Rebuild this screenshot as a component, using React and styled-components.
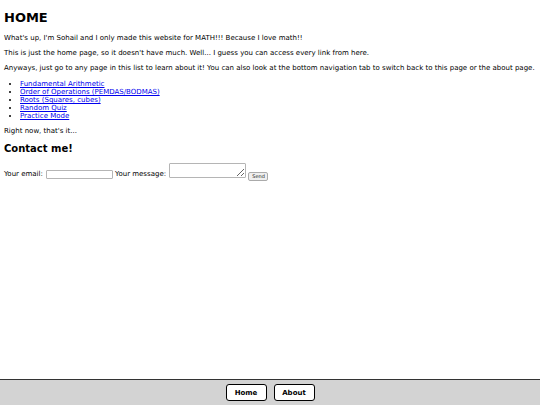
import React from 'react';
import styled, { createGlobalStyle } from 'styled-components';

const GlobalStyle = createGlobalStyle`
	html, body {
		margin: 0;
		padding: 0;
		height: 100%;
	}
	body {
		font-family: "DejaVu Sans", Verdana, sans-serif;
		font-size: 7px;
		color: #000;
		background: #fff;
	}
	#root {
		height: 100%;
	}
`;

const Page = styled.div`
	min-height: 100vh;
	display: flex;
	flex-direction: column;
`;

const Main = styled.main`
	flex: 1;
	padding: 0 4px;
`;

const H1 = styled.h1`
	font-size: 13px;
	margin: 10px 0 9px;
`;

const H2 = styled.h2`
	font-size: 10px;
	margin: 8px 0 9px;
`;

const P = styled.p`
	margin: 7px 0;
`;

const List = styled.ul`
	margin: 8px 0 7px;
	padding-left: 16px;
`;

const Item = styled.li`
	line-height: 8px;
`;

const A = styled.a`
	color: #0000ee;
`;

const Form = styled.form`
	margin: 0;
	line-height: 9px;
`;

const Input = styled.input`
	box-sizing: border-box;
	width: 67px;
	height: 9px;
	padding: 0 2px;
	border: 1px solid #b5b5b5;
	border-radius: 1px;
	font-size: 6px;
	margin: 0 2px 0 1px;
	vertical-align: baseline;
`;

const TextArea = styled.textarea`
	box-sizing: border-box;
	width: 77px;
	height: 15px;
	padding: 1px;
	border: 1px solid #b5b5b5;
	border-radius: 1px;
	font-size: 6px;
	margin: 0 2px 0 1px;
	vertical-align: -2px;
`;

const SendBtn = styled.button`
	box-sizing: border-box;
	font-family: "DejaVu Sans", sans-serif;
	font-size: 5px;
	padding: 0 3px;
	height: 9px;
	width: 20px;
	margin: 0;
	border: 1px solid #aaa;
	border-radius: 2px;
	background: #efefef;
	color: #222;
	vertical-align: -2px;
`;

const Footer = styled.nav`
	border-top: 1px solid #333;
	background: #d3d3d3;
	height: 25px;
	display: flex;
	align-items: center;
	justify-content: center;
	gap: 7px;
`;

const NavBtn = styled.button`
	font-family: "DejaVu Sans", sans-serif;
	font-weight: bold;
	font-size: 7px;
	width: 41px;
	height: 17px;
	background: #fff;
	color: #000;
	border: 1px solid #000;
	border-radius: 3px;
	cursor: pointer;
`;

const links = [
	'Fundamental Arithmetic',
	'Order of Operations (PEMDAS/BODMAS)',
	'Roots (Squares, cubes)',
	'Random Quiz',
	'Practice Mode',
];

const App = () => {
	return (
		<Page>
			<GlobalStyle />
			<Main>
				<H1>HOME</H1>
				<P>What's up, I'm Sohail and I only made this website for MATH!!! Because I love math!!</P>
				<P>This is just the home page, so it doesn't have much. Well... I guess you can access every link from here.</P>
				<P>Anyways, just go to any page in this list to learn about it! You can also look at the bottom navigation tab to switch back to this page or the about page.</P>
				<List>
					{links.map((l) => (
						<Item key={l}><A href="#">{l}</A></Item>
					))}
				</List>
				<P>Right now, that's it...</P>
				<H2>Contact me!</H2>
				<Form onSubmit={(e) => e.preventDefault()}>
					Your email: <Input type="email" />Your message: <TextArea /><SendBtn type="submit">Send</SendBtn>
				</Form>
			</Main>
			<Footer>
				<NavBtn>Home</NavBtn>
				<NavBtn>About</NavBtn>
			</Footer>
		</Page>
	);
};

export default App;
